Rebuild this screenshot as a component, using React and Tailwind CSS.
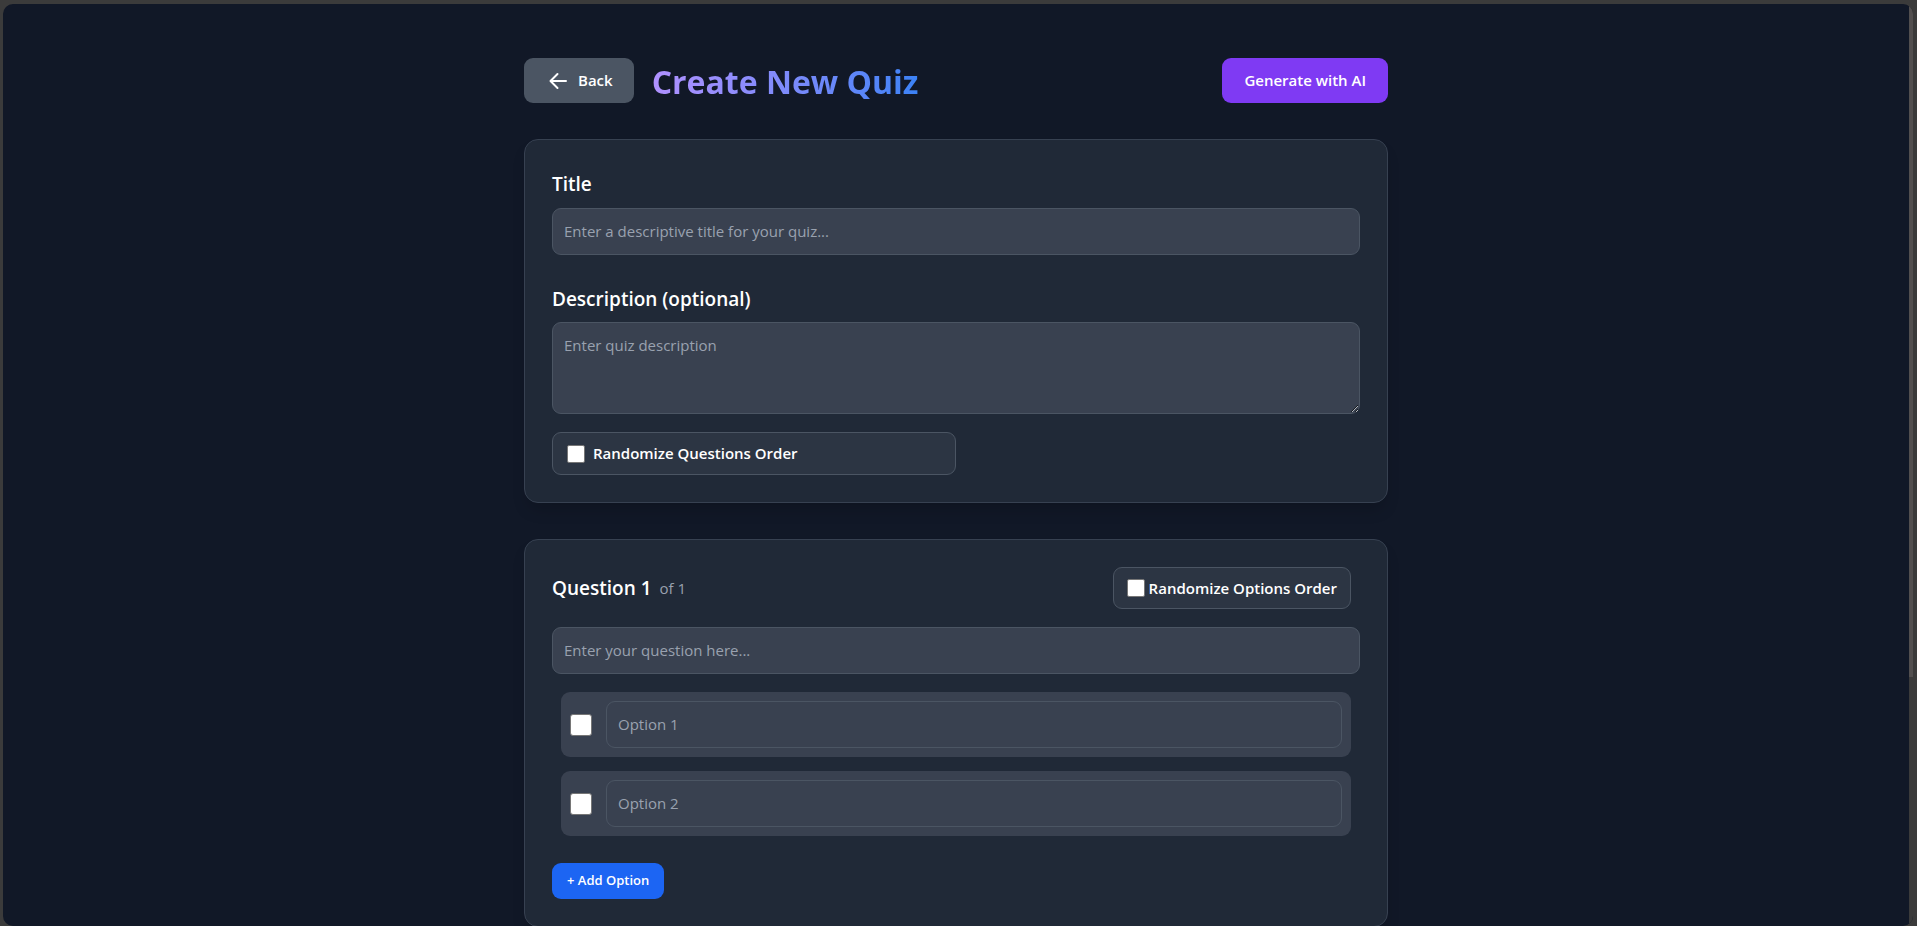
import React, { useState } from "react";

const fieldClass =
  "block w-full rounded-[9px] border border-[#4b5563] bg-[#394150] px-[11px] text-[15px] leading-6 text-white placeholder:text-[#99a1af] outline-none focus:border-violet-400";

const cardClass =
  "rounded-[14px] border border-[#374151] bg-[#202937] p-[27px] shadow-[0_10px_16px_-4px_rgba(0,0,0,0.18)]";

function Check({ id, size = "small", checked, onChange, label }) {
  const box = size === "large" ? "size-[22px] rounded-[3px]" : "size-[18px] rounded-[2px]";
  return (
    <input
      id={id}
      type="checkbox"
      aria-label={label}
      checked={checked}
      onChange={onChange}
      className={`${box} shrink-0 appearance-none border border-[#767676] bg-white checked:bg-violet-600`}
    />
  );
}

function BackIcon() {
  return (
    <svg
      className="size-[18px]"
      viewBox="0 0 18 18"
      fill="none"
      stroke="currentColor"
      strokeWidth="2"
      strokeLinecap="round"
      strokeLinejoin="round"
      aria-hidden="true"
    >
      <path d="M17 9H1.5M8.5 2L1.5 9l7 7" />
    </svg>
  );
}

export default function App() {
  const [options, setOptions] = useState([false, false]);
  const [randomQuestions, setRandomQuestions] = useState(false);
  const [randomOptions, setRandomOptions] = useState(false);

  return (
    <div className="h-screen overflow-hidden bg-[#3b3b3b] pt-1 pr-1 pl-[3px] font-['Open_Sans','Noto_Sans',sans-serif] text-white">
      <div className="flex h-full overflow-hidden rounded-[10px] bg-[#111827]">
        <main className="min-w-0 flex-1">
          <div className="mx-auto flex max-w-[864px] flex-col gap-9 pt-[54px]">
            <header className="flex items-center justify-between">
              <div className="flex items-center gap-[18px]">
                <button
                  type="button"
                  className="flex h-[45px] items-center gap-[11px] rounded-[9px] bg-[#4b5563] pr-[21px] pl-[25px] text-[15px] font-semibold"
                >
                  <BackIcon />
                  Back
                </button>
                <h1 className="bg-linear-to-r from-[#b091ff] to-[#3b82f6] bg-clip-text pt-0.5 text-[32px] leading-[43px] font-bold text-transparent">
                  Create New Quiz
                </h1>
              </div>
              <button
                type="button"
                className="h-[45px] rounded-[9px] bg-[#7f3af3] px-[22px] text-[15px] font-semibold"
              >
                Generate with AI
              </button>
            </header>

            <section className={cardClass}>
              <label htmlFor="title" className="block pt-[3px] pb-[10px] text-[19px] leading-7 font-semibold">
                Title
              </label>
              <input id="title" type="text" placeholder="Enter a descriptive title for your quiz..." className={`${fieldClass} h-[47px] pb-0.5`} />
              <label htmlFor="description" className="block pt-[30px] pb-[9px] text-[19px] leading-7 font-semibold">
                Description (optional)
              </label>
              <textarea id="description" placeholder="Enter quiz description" className={`${fieldClass} h-[92px] py-[10px]`} />
              <label
                htmlFor="random-questions"
                className="mt-[18px] flex h-[43px] w-1/2 items-center gap-2 rounded-[9px] border border-[#4b5563] bg-[#2c3543] px-[14px] text-[15px] font-semibold"
              >
                <Check id="random-questions" checked={randomQuestions} onChange={(e) => setRandomQuestions(e.target.checked)} />
                Randomize Questions Order
              </label>
            </section>

            <section className={cardClass}>
              <div className="flex items-center justify-between pr-[9px]">
                <h2 className="flex items-center gap-2 text-[19px] leading-7 font-semibold">
                  Question 1
                  <span className="text-[15px] font-normal text-[#99a1af]">of 1</span>
                </h2>
                <label
                  htmlFor="random-options"
                  className="flex h-[42px] items-center gap-1 rounded-[9px] border border-[#4b5563] bg-[#2c3543] px-[13px] text-[15px] font-semibold"
                >
                  <Check id="random-options" checked={randomOptions} onChange={(e) => setRandomOptions(e.target.checked)} />
                  Randomize Options Order
                </label>
              </div>
              <input
                type="text"
                aria-label="Question 1"
                placeholder="Enter your question here..."
                className={`${fieldClass} mt-[18px] h-[47px] pb-0.5`}
              />
              <ul className="mt-[18px] flex flex-col gap-[14px] px-[9px]">
                {options.map((checked, i) => (
                  <li key={i} className="flex items-center gap-[14px] rounded-[9px] bg-[#394150] p-[9px]">
                    <Check
                      size="large"
                      label={`Option ${i + 1} is correct`}
                      checked={checked}
                      onChange={() => setOptions(options.map((o, j) => (j === i ? !o : o)))}
                    />
                    <input type="text" aria-label={`Option ${i + 1}`} placeholder={`Option ${i + 1}`} className={`${fieldClass} h-[47px] pb-0.5`} />
                  </li>
                ))}
              </ul>
              <button
                type="button"
                onClick={() => setOptions([...options, false])}
                className="mt-[27px] block h-9 rounded-[9px] bg-[#1c65f3] px-[15px] text-[13px] font-semibold"
              >
                + Add Option
              </button>
            </section>
          </div>
        </main>
        <div className="w-1 bg-[#3b3b3b]" aria-hidden="true">
          <div className="h-[73%] bg-[#524f4f]" />
        </div>
      </div>
    </div>
  );
}
